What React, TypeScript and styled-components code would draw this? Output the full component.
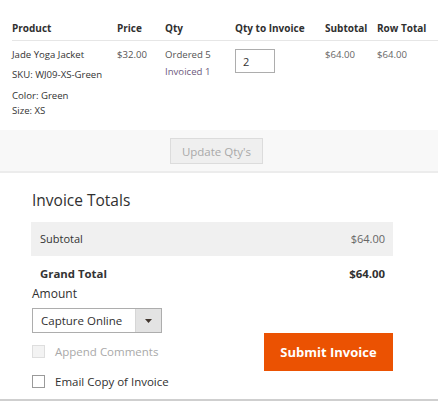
import React from "react";
import styled, { createGlobalStyle } from "styled-components";

const Global = createGlobalStyle`
  html, body { margin: 0; padding: 0; background: #ffffff; }
  body { font-family: "Open Sans", "DejaVu Sans", sans-serif; color: #333333; }
  * { box-sizing: border-box; }
`;

const Page = styled.div`
  width: 438px;
  height: 402px;
  overflow: hidden;
  display: flex;
  flex-direction: column;
`;

const TableWrap = styled.div`
  padding-left: 12px;
`;

const ItemsTable = styled.table`
  width: 426px;
  table-layout: fixed;
  border-collapse: collapse;
`;

const Th = styled.th`
  font-size: 10px;
  font-weight: 700;
  color: #303030;
  text-align: left;
  line-height: 14px;
  padding: 21px 0 5px;
  border-bottom: 1px solid #e6e6e6;
  white-space: nowrap;
`;

const Td = styled.td`
  font-size: 9.6px;
  line-height: 15px;
  vertical-align: top;
  padding: 6px 0 12px;
  color: #333333;
`;

const Line = styled.div<{ $gap?: number; $tone?: string }>`
  margin-top: ${(p) => p.$gap ?? 0}px;
  color: ${(p) => p.$tone ?? "#333333"};
  white-space: nowrap;
`;

const QtyInput = styled.input`
  display: block;
  margin-top: 2px;
  width: 40px;
  height: 24px;
  border: 1px solid #adadad;
  padding: 0 0 0 7px;
  font-family: inherit;
  font-size: 11px;
  color: #333333;
  outline: none;
`;

const UpdateBar = styled.div`
  background: #f8f8f8;
  border-bottom: 2px solid #ececec;
  padding: 8px 0 7px;
  display: flex;
  justify-content: center;
`;

const UpdateButton = styled.button`
  width: 93px;
  height: 26px;
  margin-right: 5px;
  background: #efefef;
  border: 1px solid #dcdcdc;
  color: #a9a9a9;
  font-family: inherit;
  font-size: 11.5px;
  padding: 0;
`;

const TotalsSection = styled.div`
  padding: 17px 0 0 31px;
  width: 393px;
  display: flex;
  flex-direction: column;
`;

const TotalsTitle = styled.div`
  font-size: 15.5px;
  line-height: 20px;
  color: #303030;
  margin: 0 0 12px 1px;
`;

const TotalRow = styled.div<{ $grand?: boolean }>`
  display: flex;
  justify-content: space-between;
  font-size: ${(p) => (p.$grand ? "11.4px" : "11px")};
  line-height: 16px;
  padding: ${(p) => (p.$grand ? "10px 8px 4px 9px" : "9px 8px 9px 9px")};
  background: ${(p) => (p.$grand ? "transparent" : "#f0f0f0")};
  font-weight: ${(p) => (p.$grand ? 700 : 400)};
  color: #333333;
`;

const Amount = styled.span<{ $grand?: boolean }>`
  color: ${(p) => (p.$grand ? "#303030" : "#666666")};
`;

const FieldLabel = styled.div`
  font-size: 12px;
  line-height: 16px;
  color: #303030;
  margin: 0 0 6px 1px;
`;

const SelectBox = styled.div`
  margin-left: 1px;
  width: 130px;
  height: 25px;
  border: 1px solid #adadad;
  display: flex;
  align-items: stretch;
  background: #ffffff;
`;

const SelectText = styled.div`
  flex: 1;
  font-size: 11.5px;
  line-height: 23px;
  padding-left: 8px;
  color: #303030;
`;

const SelectArrow = styled.div`
  width: 26px;
  background: #e3e3e3;
  border-left: 1px solid #d6d6d6;
  display: flex;
  align-items: center;
  justify-content: center;
`;

const ActionsRow = styled.div`
  display: flex;
  justify-content: space-between;
  align-items: flex-start;
`;

const CheckList = styled.div`
  display: flex;
  flex-direction: column;
  padding-top: 12px;
  gap: 17px;
`;

const CheckItem = styled.label<{ $disabled?: boolean }>`
  display: flex;
  align-items: center;
  gap: 10px;
  font-size: 11.5px;
  line-height: 13px;
  color: ${(p) => (p.$disabled ? "#a9a9a9" : "#303030")};
  margin-left: 1px;
`;

const Box = styled.span<{ $disabled?: boolean }>`
  width: 13px;
  height: 13px;
  border: 1px solid ${(p) => (p.$disabled ? "#dedede" : "#9a9a9a")};
  background: ${(p) => (p.$disabled ? "#f3f3f3" : "#ffffff")};
  display: inline-block;
`;

const SubmitButton = styled.button`
  width: 129px;
  height: 38px;
  background: #eb5202;
  border: none;
  color: #ffffff;
  font-family: inherit;
  font-size: 13px;
  font-weight: 700;
  padding: 0;
`;

const Spacer = styled.div`
  flex: 1;
`;

const BottomRule = styled.div`
  height: 2px;
  background: #cfcfcf;
  margin-bottom: 1px;
`;

export default function App() {
  return (
    <Page>
      <Global />
      <TableWrap>
        <ItemsTable>
          <colgroup>
            <col style={{ width: 105 }} />
            <col style={{ width: 48 }} />
            <col style={{ width: 70 }} />
            <col style={{ width: 90 }} />
            <col style={{ width: 52 }} />
            <col style={{ width: 61 }} />
          </colgroup>
          <thead>
            <tr>
              <Th>Product</Th>
              <Th>Price</Th>
              <Th>Qty</Th>
              <Th>Qty to Invoice</Th>
              <Th>Subtotal</Th>
              <Th>Row Total</Th>
            </tr>
          </thead>
          <tbody>
            <tr>
              <Td>
                <Line>Jade Yoga Jacket</Line>
                <Line $gap={5}>SKU: WJ09-XS-Green</Line>
                <Line $gap={6}>Color: Green</Line>
                <Line>Size: XS</Line>
              </Td>
              <Td>
                <Line $tone="#555555">$32.00</Line>
              </Td>
              <Td>
                <Line $tone="#555555">Ordered 5</Line>
                <Line $gap={2} $tone="#6d5a7d">Invoiced 1</Line>
              </Td>
              <Td>
                <QtyInput defaultValue="2" />
              </Td>
              <Td>
                <Line $tone="#666666">$64.00</Line>
              </Td>
              <Td>
                <Line $tone="#666666">$64.00</Line>
              </Td>
            </tr>
          </tbody>
        </ItemsTable>
      </TableWrap>
      <UpdateBar>
        <UpdateButton disabled>Update Qty's</UpdateButton>
      </UpdateBar>
      <TotalsSection>
        <TotalsTitle>Invoice Totals</TotalsTitle>
        <TotalRow>
          <span>Subtotal</span>
          <Amount>$64.00</Amount>
        </TotalRow>
        <TotalRow $grand>
          <span>Grand Total</span>
          <Amount $grand>$64.00</Amount>
        </TotalRow>
        <FieldLabel>Amount</FieldLabel>
        <SelectBox>
          <SelectText>Capture Online</SelectText>
          <SelectArrow>
            <svg width="7" height="4" viewBox="0 0 7 4">
              <path d="M0 0 L7 0 L3.5 4 Z" fill="#41362f" />
            </svg>
          </SelectArrow>
        </SelectBox>
        <ActionsRow>
          <CheckList>
            <CheckItem $disabled>
              <Box $disabled />
              Append Comments
            </CheckItem>
            <CheckItem>
              <Box />
              Email Copy of Invoice
            </CheckItem>
          </CheckList>
          <SubmitButton>Submit Invoice</SubmitButton>
        </ActionsRow>
      </TotalsSection>
      <Spacer />
      <BottomRule />
    </Page>
  );
}
